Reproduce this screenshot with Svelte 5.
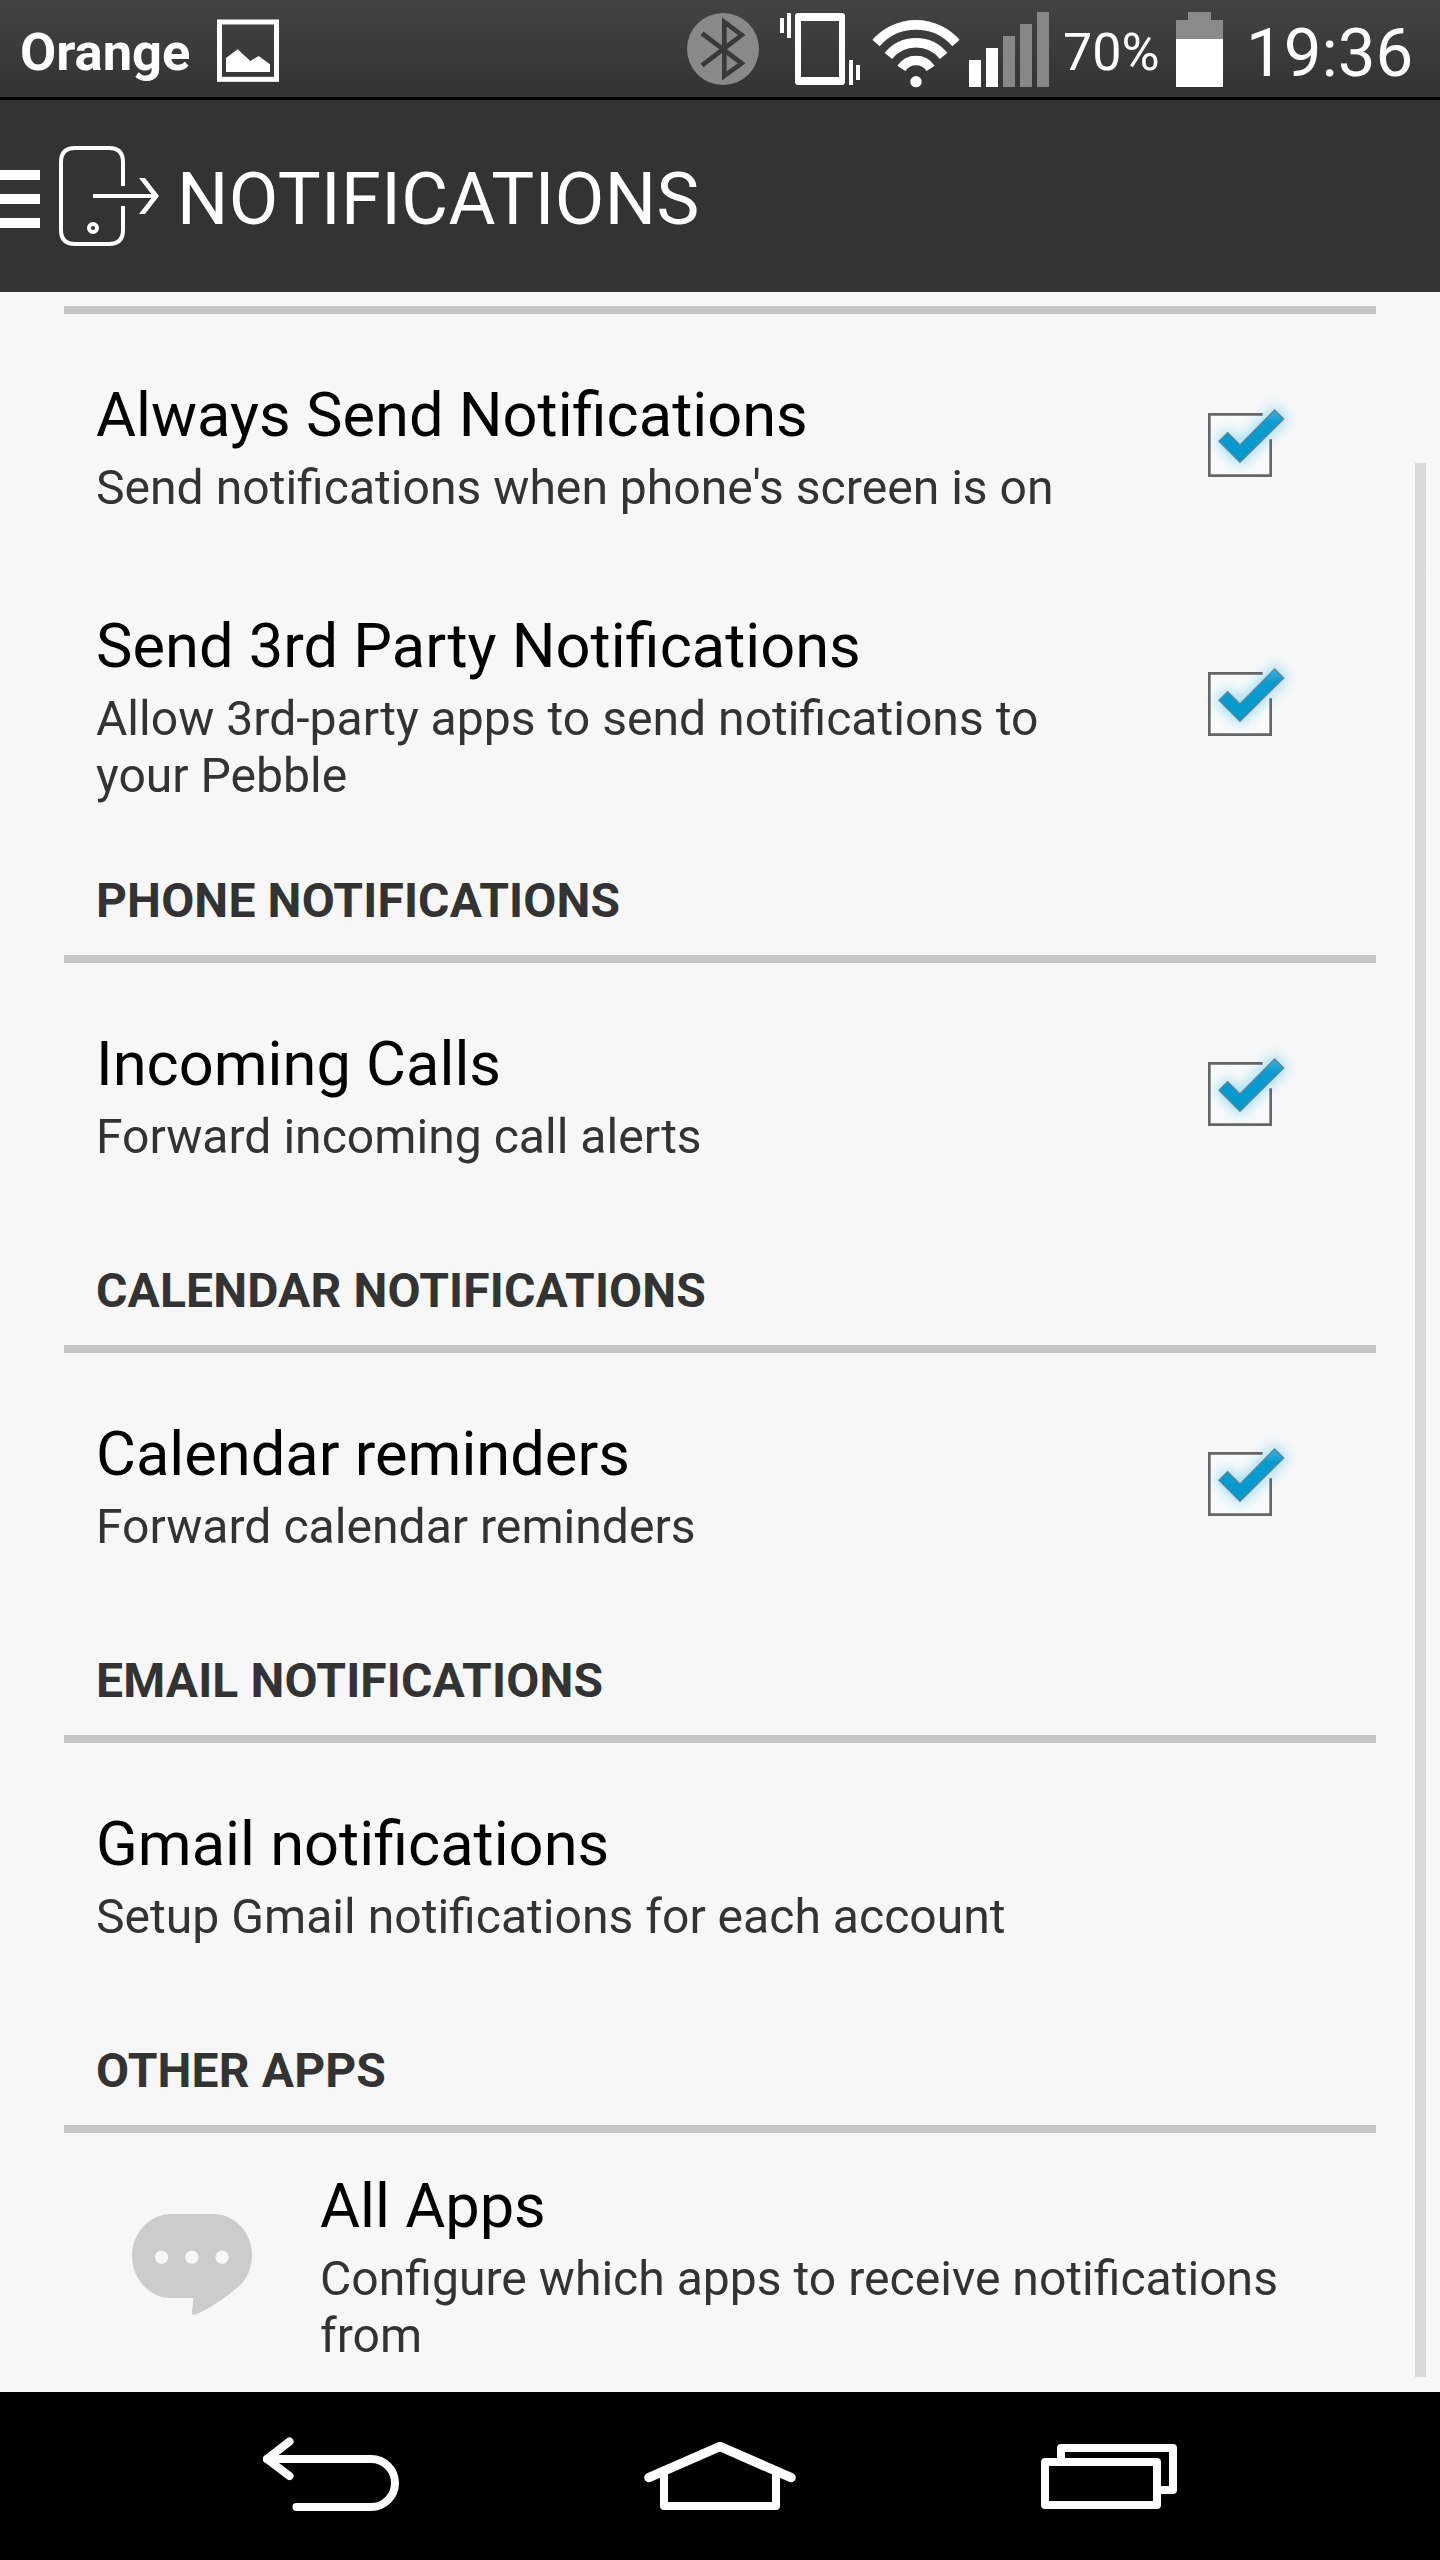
<script lang="ts">
  interface Item {
    title: string;
    summary: string;
    checkbox?: boolean;
    icon?: boolean;
  }

  interface Section {
    heading: string;
    items: Item[];
  }

  const sections: Section[] = [
    {
      heading: '',
      items: [
        {
          title: 'Always Send Notifications',
          summary: "Send notifications when phone's screen is on",
          checkbox: true
        },
        {
          title: 'Send 3rd Party Notifications',
          summary: 'Allow 3rd-party apps to send notifications to your Pebble',
          checkbox: true
        }
      ]
    },
    {
      heading: 'PHONE NOTIFICATIONS',
      items: [{ title: 'Incoming Calls', summary: 'Forward incoming call alerts', checkbox: true }]
    },
    {
      heading: 'CALENDAR NOTIFICATIONS',
      items: [{ title: 'Calendar reminders', summary: 'Forward calendar reminders', checkbox: true }]
    },
    {
      heading: 'EMAIL NOTIFICATIONS',
      items: [{ title: 'Gmail notifications', summary: 'Setup Gmail notifications for each account' }]
    },
    {
      heading: 'OTHER APPS',
      items: [
        { title: 'All Apps', summary: 'Configure which apps to receive notifications from', icon: true }
      ]
    }
  ];

  const signalBars = [0, 1, 2, 3, 4];
</script>

<div class="screen">
  <header class="status-bar">
    <span class="carrier">Orange</span>
    <svg class="picture-icon" viewBox="651 0 186 291">
      <rect x="658.500" y="66" width="171" height="172" fill="none" stroke="#fff" stroke-width="15" />
      <path d="M678 216v-42l35-26 38 35 25-15 34 25v23z" fill="#fff" />
    </svg>

    <div class="status-icons">
      <svg class="bluetooth-icon" viewBox="51 0 216 291">
        <circle cx="159" cy="147" r="108" fill="#898989" />
        <path
          d="M96 100L215 190L163 228V66L215 105L96 196"
          fill="none"
          stroke="#393939"
          stroke-width="14"
        />
      </svg>
      <svg class="vibrate-icon" viewBox="330 0 240 291" fill="#fff">
        <rect x="330" y="54" width="12" height="45" />
        <rect x="351" y="39" width="12" height="75" />
        <path
          fill-rule="evenodd"
          d="M384 39h132q9 0 9 9v198q0 9-9 9h-132q-9 0-9-9v-198q0-9 9-9zM393 63v168h114v-168z"
        />
        <rect x="537" y="180" width="12" height="75" />
        <rect x="558" y="195" width="12" height="45" />
      </svg>
      <svg class="wifi-icon" viewBox="606 0 264 291">
        <g fill="none" stroke="#fff" stroke-width="29">
          <path d="M618 129A160 160 0 0 1 858 129" />
          <path d="M655 167.700A107 107 0 0 1 821 167.700" />
          <path d="M694 205A53 53 0 0 1 782 205" />
        </g>
        <circle cx="738" cy="245" r="17" fill="#fff" />
      </svg>
      <svg class="signal-icon" viewBox="897 0 240 291">
        {#each signalBars as bar}
          <rect
            x={897 + bar * 51}
            y={180 - bar * 36}
            width="36"
            height={81 + bar * 36}
            fill={bar < 2 ? '#fff' : '#878787'}
          />
        {/each}
      </svg>
      <span class="battery-level">70%</span>
      <svg class="battery-icon" viewBox="408 0 141 291">
        <path d="M408 117V60h36V36h69v24h36v57z" fill="#8a8a8a" />
        <rect x="408" y="117" width="141" height="144" fill="#fff" />
      </svg>
      <span class="clock">19:36</span>
    </div>
  </header>

  <div class="action-bar">
    <svg class="drawer-icon" viewBox="0 300 120 576" fill="#fff">
      <rect x="0" y="510" width="120" height="30" />
      <rect x="0" y="582" width="120" height="30" />
      <rect x="0" y="654" width="120" height="30" />
    </svg>
    <svg class="app-icon" viewBox="177 300 300 576">
      <path
        d="M369 558V486Q369 444 327 444H225Q183 444 183 486V690Q183 732 225 732H327Q369 732 369 690V618"
        fill="none"
        stroke="#fff"
        stroke-width="12"
      />
      <circle cx="279" cy="684" r="12" fill="none" stroke="#fff" stroke-width="12" />
      <path d="M279 582h175l-37-48h18l42 54-42 54h-18l37-48h-175z" fill="#fff" />
    </svg>
    <h1 class="page-title">NOTIFICATIONS</h1>
  </div>

  <main class="preferences">
    {#each sections as section}
      <section>
        <h2 class="category" class:scrolled={!section.heading}>{section.heading}</h2>
        {#each section.items as item}
          <div class="preference" class:has-icon={item.icon}>
            {#if item.icon}
              <svg class="apps-icon" viewBox="96 100 361 304">
                <path
                  d="M215 100H340C405 100 457 156 457 222C457 262 444 295 416 319C378 352 330 384 291 401Q276 407 276 399L281 353H212C148 353 96 293 96 227C96 158 148 100 215 100z"
                  fill="#ccc"
                />
                <circle cx="185" cy="230" r="20" fill="#f7f7f7" />
                <circle cx="276" cy="230" r="20" fill="#f7f7f7" />
                <circle cx="367" cy="230" r="20" fill="#f7f7f7" />
              </svg>
            {/if}
            <div class="preference-text">
              <div class="title">{item.title}</div>
              <div class="summary">{item.summary}</div>
            </div>
            {#if item.checkbox}
              <svg class="checkbox" viewBox="0 42 390 300">
                <defs>
                  <linearGradient id="tick" x1="0" y1="0" x2="0" y2="1">
                    <stop offset="0" stop-color="#3db2de" />
                    <stop offset="0.250" stop-color="#0c9bd0" />
                    <stop offset="1" stop-color="#0099cc" />
                  </linearGradient>
                  <filter id="glow" x="-40%" y="-40%" width="180%" height="180%">
                    <feGaussianBlur stdDeviation="19" />
                  </filter>
                </defs>
                <rect x="88" y="103" width="184" height="184" fill="#fafafa" />
                <path
                  d="M115 184l28-28 37 37 104-105 29 29-133 132z"
                  fill="#5cc8ee"
                  stroke="#5cc8ee"
                  stroke-width="16"
                  opacity="0.600"
                  filter="url(#glow)"
                />
                <path d="M248 103H88V287H272V178" fill="none" stroke="#666" stroke-width="8" />
                <path
                  d="M117 184l26-26 37 37 104-105 27 27-131 130z"
                  fill="url(#tick)"
                  stroke="#5e8494"
                  stroke-width="4"
                />
              </svg>
            {/if}
          </div>
        {/each}
      </section>
    {/each}
    <div class="scrollbar"></div>
  </main>

  <nav class="nav-bar">
    <svg class="back-icon" viewBox="263 2392 136 168">
      <g fill="none" stroke="#fff" stroke-width="8" stroke-linecap="round" stroke-linejoin="round">
        <path d="M289.500 2441.500L267 2459l22.500 17" />
        <path d="M267 2459H371a24 24 0 0 1 0 48H296.500" />
      </g>
    </svg>
    <svg class="home-icon" viewBox="644 2392 152 168">
      <g fill="none" stroke="#fff" stroke-linecap="round" stroke-linejoin="round">
        <path d="M649 2477.500L720 2446.500L791 2477.500" stroke-width="9.500" />
        <path d="M664 2472V2506H776V2472" stroke-width="8" stroke-linecap="butt" />
      </g>
    </svg>
    <svg class="recents-icon" viewBox="1041 2392 136 168">
      <g fill="#000" stroke="#fff" stroke-width="8" stroke-linejoin="round">
        <rect x="1061" y="2448" width="112" height="42" />
        <rect x="1045" y="2462" width="112" height="43" />
      </g>
    </svg>
  </nav>
</div>

<style>
  :global(body) {
    margin: 0;
    background-color: #000;
  }

  .screen {
    width: 1440px;
    height: 2560px;
    display: flex;
    flex-direction: column;
    overflow: hidden;
    font-family: Roboto, sans-serif;
    color: #333;
    background-color: #f7f7f7;
  }

  svg {
    display: block;
    flex: none;
  }

  .status-bar {
    flex: none;
    display: flex;
    height: 97px;
    border-bottom: 3px solid #000;
    color: #fff;
    background: linear-gradient(#434343, #333);
    white-space: nowrap;
  }

  .carrier {
    width: 197px;
    padding-left: 20px;
    font-size: 52.5px;
    font-weight: 700;
    line-height: 105px;
  }

  .picture-icon {
    width: 62px;
    height: 97px;
  }

  .status-icons {
    display: flex;
    margin-left: auto;
  }

  .bluetooth-icon {
    width: 72px;
    height: 97px;
    margin-right: 21px;
  }

  .vibrate-icon {
    width: 80px;
    height: 97px;
    margin-right: 12px;
  }

  .wifi-icon {
    width: 88px;
    height: 97px;
    margin-right: 9px;
  }

  .signal-icon {
    width: 80px;
    height: 97px;
  }

  .battery-level {
    width: 113px;
    padding-left: 14px;
    font-size: 52px;
    line-height: 105px;
  }

  .battery-icon {
    width: 47px;
    height: 97px;
  }

  .clock {
    width: 194px;
    padding-left: 23px;
    font-size: 67.2px;
    line-height: 106px;
  }

  .action-bar {
    flex: none;
    display: flex;
    height: 192px;
    color: #fff;
    background-color: #333;
  }

  .drawer-icon {
    width: 40px;
    height: 192px;
  }

  .app-icon {
    width: 100px;
    height: 192px;
    margin-left: 19px;
  }

  .page-title {
    margin: 0 0 0 18px;
    font-size: 72px;
    font-weight: 400;
    line-height: 199px;
    letter-spacing: 0.4px;
  }

  .preferences {
    position: relative;
    flex: 1;
    min-height: 0;
    overflow: hidden;
  }

  .category {
    height: 130.6px;
    margin: 0 64px;
    padding: 40px 32px 0;
    box-sizing: border-box;
    border-bottom: 8px solid #c6c6c6;
    font-size: 48px;
    font-weight: 700;
    line-height: 56px;
    letter-spacing: 0.15px;
  }

  .category.scrolled {
    height: 22px;
    padding: 0;
  }

  .preference {
    display: flex;
    align-items: center;
    justify-content: space-between;
    height: 259.4px;
    box-sizing: border-box;
    padding: 0 130px 0 96px;
  }

  .preference + .preference {
    box-shadow: inset 0 2px #f9f9f9;
  }

  .preference.has-icon {
    justify-content: flex-start;
    padding: 0 64px 0 132px;
  }

  .preference-text {
    max-width: 1000px;
  }

  .title {
    margin-bottom: 1px;
    font-size: 61.4px;
    line-height: 86px;
    color: #000;
  }

  .summary {
    font-size: 48.1px;
    line-height: 57px;
  }

  .apps-icon {
    width: 120px;
    height: 101px;
    margin: 2px 68px 0 0;
  }

  .checkbox {
    width: 130px;
    height: 100px;
  }

  .scrollbar {
    position: absolute;
    top: 171px;
    right: 14px;
    width: 11px;
    height: 1914px;
    background-color: #dadada;
  }

  .nav-bar {
    flex: none;
    display: flex;
    height: 168px;
    padding-left: 263px;
    background-color: #000;
  }

  .back-icon {
    width: 136px;
    height: 168px;
    margin-right: 245px;
  }

  .home-icon {
    width: 152px;
    height: 168px;
    margin-right: 245px;
  }

  .recents-icon {
    width: 136px;
    height: 168px;
  }
</style>
